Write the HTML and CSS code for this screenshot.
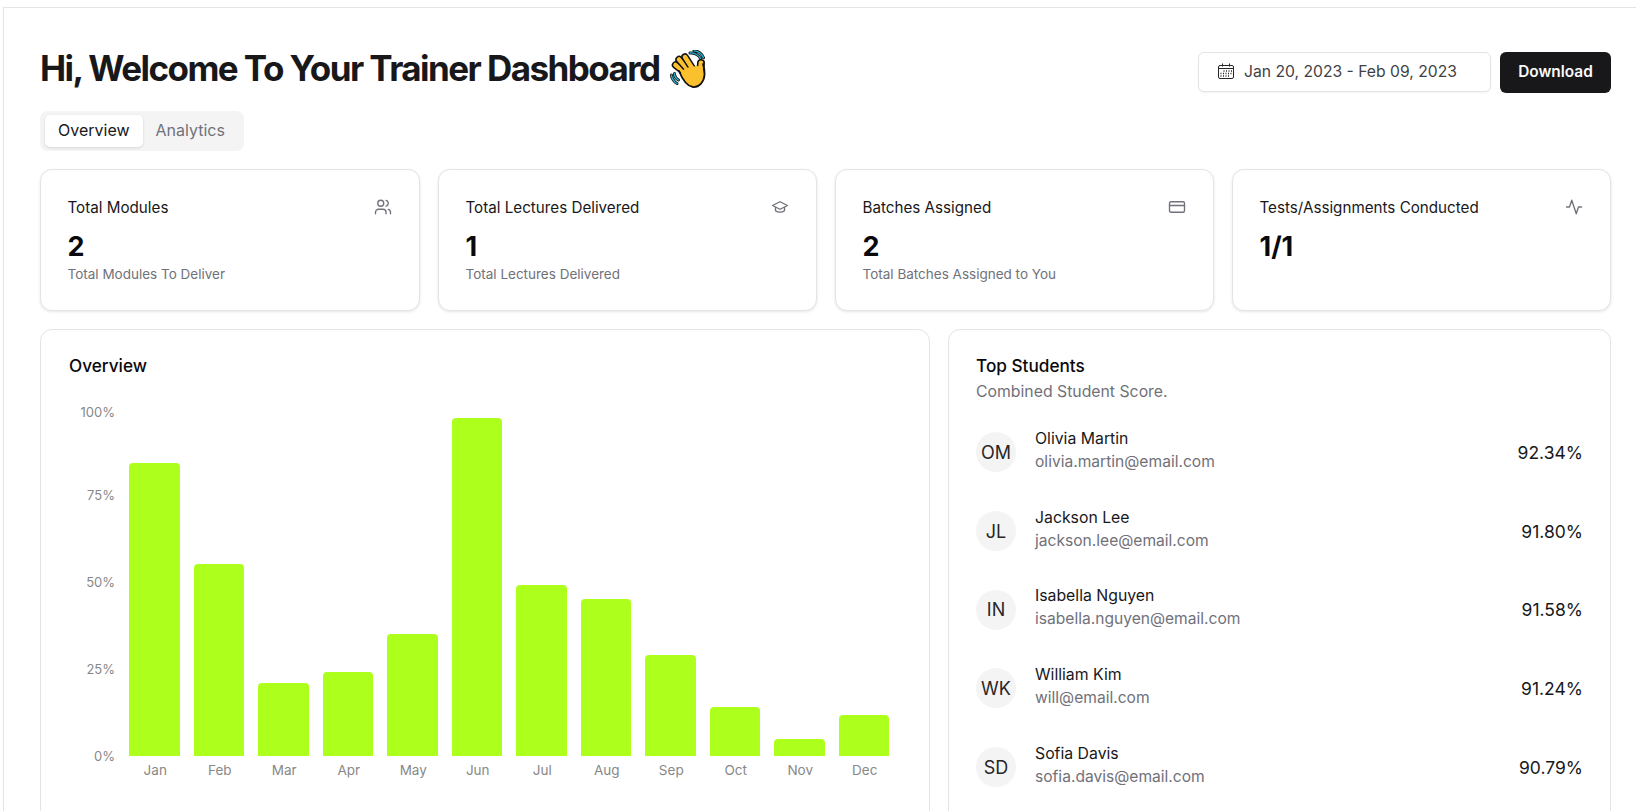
FILE: index.html
```html
<!DOCTYPE html>
<html lang="en">
<head>
    <meta charset="UTF-8">
    <meta name="viewport" content="width=device-width, initial-scale=1.0">
    <title>Trainer Dashboard</title>
    <link rel="stylesheet" href="styles.css">
</head>
<body>
    <main class="dashboard">
        <header class="page-header">
            <h1>Hi, Welcome To Your Trainer Dashboard
                <svg class="wave" viewBox="0 0 36 38" width="36" height="38" aria-hidden="true">
                    <g fill="none" stroke-linecap="round">
                        <path d="M20 3c4-.5 9 2 10.500 5.500M24 .8c4 0 8 3 9.500 7" stroke="#111" stroke-width="3"/>
                        <path d="M20 3c4-.5 9 2 10.500 5.500M24 .8c4 0 8 3 9.500 7" stroke="#27b5d6" stroke-width="1.300"/>
                        <path d="M1.500 25c0 3 2.500 7 5.500 8.500M4.500 23.500c0 2.500 1.500 5 4 6.500" stroke="#111" stroke-width="3"/>
                        <path d="M1.500 25c0 3 2.500 7 5.500 8.500M4.500 23.500c0 2.500 1.500 5 4 6.500" stroke="#27b5d6" stroke-width="1.300"/>
                        <path d="M30 25 31 13" stroke="#111" stroke-width="8"/>
                        <path d="M30 25 31 13" stroke="#fbc02d" stroke-width="4.800"/>
                        <path d="M17 24 5.500 15" stroke="#111" stroke-width="7.500"/>
                        <path d="M17 24 5.500 15" stroke="#fbc02d" stroke-width="4.500"/>
                        <path d="M20 22 9 9.500" stroke="#111" stroke-width="7.500"/>
                        <path d="M20 22 9 9.500" stroke="#fbc02d" stroke-width="4.500"/>
                        <path d="M24 21 15 7" stroke="#111" stroke-width="7.500"/>
                        <path d="M24 21 15 7" stroke="#fbc02d" stroke-width="4.500"/>
                    </g>
                    <path d="M11 24c-1-3 5-6 9-7l8-1c4 0 6 4 6 9 0 8-5 12-11 12-6 0-9-5-12-13z" fill="#fbc02d"/>
                    <path d="M9 21c2 5 6 15 14 16 6 .5 11-5 11.500-12 .2-4-.5-8-1.500-11" fill="none" stroke="#111" stroke-width="1.800" stroke-linecap="round"/>
                </svg>
            </h1>
            <div class="header-actions">
                <div class="date-range">
                    <svg class="icon-calendar" viewBox="0 0 16 16" width="16" height="16" fill="none" stroke="#27272a" aria-hidden="true">
                        <rect x="0.500" y="2.500" width="15" height="13" rx="1.500"/>
                        <path d="M0.500 5.500h15M4.500 0.500v3M11.500 0.500v3"/>
                        <path d="M5.500 8h1M8 8h1M10.500 8h1M13 8h1M2.500 10.500h1M5 10.500h1M7.500 10.500h1M10 10.500h1M12.500 10.500h1M2.500 13h1M5 13h1M7.500 13h1M10 13h1" stroke-width="1.300"/>
                    </svg>
                    <span>Jan 20, 2023 - Feb 09, 2023</span>
                </div>
                <button class="download-btn" type="button">Download</button>
            </div>
        </header>

        <div class="tabs">
            <button class="tab active" type="button">Overview</button>
            <button class="tab" type="button">Analytics</button>
        </div>

        <section class="stats">
            <div class="card stat-card">
                <div class="stat-head">
                    <span>Total Modules</span>
                    <svg class="stat-icon" viewBox="0 0 24 24" aria-hidden="true"><path d="M16 21v-2a4 4 0 0 0-4-4H6a4 4 0 0 0-4 4v2"/><circle cx="9" cy="7" r="4"/><path d="M22 21v-2a4 4 0 0 0-3-3.870"/><path d="M16 3.130a4 4 0 0 1 0 7.750"/></svg>
                </div>
                <div class="stat-value">2</div>
                <p class="stat-sub">Total Modules To Deliver</p>
            </div>
            <div class="card stat-card">
                <div class="stat-head">
                    <span>Total Lectures Delivered</span>
                    <svg class="stat-icon" viewBox="0 0 24 24" aria-hidden="true"><path d="M22 10 12 5 2 10l10 5 10-5z"/><path d="M6 12.500V17c3 2.500 9 2.500 12 0v-4.500"/></svg>
                </div>
                <div class="stat-value">1</div>
                <p class="stat-sub">Total Lectures Delivered</p>
            </div>
            <div class="card stat-card">
                <div class="stat-head">
                    <span>Batches Assigned</span>
                    <svg class="stat-icon" viewBox="0 0 24 24" aria-hidden="true"><rect x="2" y="5" width="20" height="14" rx="2"/><path d="M2 10h20"/></svg>
                </div>
                <div class="stat-value">2</div>
                <p class="stat-sub">Total Batches Assigned to You</p>
            </div>
            <div class="card stat-card">
                <div class="stat-head">
                    <span>Tests/Assignments Conducted</span>
                    <svg class="stat-icon" viewBox="0 0 24 24" aria-hidden="true"><path d="M22 12h-4l-3 9L9 3l-3 9H2"/></svg>
                </div>
                <div class="stat-value">1/1</div>
            </div>
        </section>

        <section class="panels">
            <div class="card panel overview-panel">
                <h3>Overview</h3>
                <div class="chart">
                    <div class="y-axis">
                        <span>100%</span>
                        <span>75%</span>
                        <span>50%</span>
                        <span>25%</span>
                        <span>0%</span>
                    </div>
                    <div class="bars">
                        <div class="bar-col"><div class="bar-track"><div class="bar" style="height: 293px"></div></div><span>Jan</span></div>
                        <div class="bar-col"><div class="bar-track"><div class="bar" style="height: 192px"></div></div><span>Feb</span></div>
                        <div class="bar-col"><div class="bar-track"><div class="bar" style="height: 73px"></div></div><span>Mar</span></div>
                        <div class="bar-col"><div class="bar-track"><div class="bar" style="height: 84px"></div></div><span>Apr</span></div>
                        <div class="bar-col"><div class="bar-track"><div class="bar" style="height: 122px"></div></div><span>May</span></div>
                        <div class="bar-col"><div class="bar-track"><div class="bar" style="height: 338px"></div></div><span>Jun</span></div>
                        <div class="bar-col"><div class="bar-track"><div class="bar" style="height: 171px"></div></div><span>Jul</span></div>
                        <div class="bar-col"><div class="bar-track"><div class="bar" style="height: 157px"></div></div><span>Aug</span></div>
                        <div class="bar-col"><div class="bar-track"><div class="bar" style="height: 101px"></div></div><span>Sep</span></div>
                        <div class="bar-col"><div class="bar-track"><div class="bar" style="height: 49px"></div></div><span>Oct</span></div>
                        <div class="bar-col"><div class="bar-track"><div class="bar" style="height: 17px"></div></div><span>Nov</span></div>
                        <div class="bar-col"><div class="bar-track"><div class="bar" style="height: 41px"></div></div><span>Dec</span></div>
                    </div>
                </div>
            </div>

            <div class="card panel students-panel">
                <h3>Top Students</h3>
                <p class="panel-sub">Combined Student Score.</p>
                <ul class="student-list">
                    <li class="student">
                        <div class="avatar">OM</div>
                        <div class="student-info"><p class="student-name">Olivia Martin</p><p class="student-email">olivia.martin@email.com</p></div>
                        <div class="student-score">92.34%</div>
                    </li>
                    <li class="student">
                        <div class="avatar">JL</div>
                        <div class="student-info"><p class="student-name">Jackson Lee</p><p class="student-email">jackson.lee@email.com</p></div>
                        <div class="student-score">91.80%</div>
                    </li>
                    <li class="student">
                        <div class="avatar">IN</div>
                        <div class="student-info"><p class="student-name">Isabella Nguyen</p><p class="student-email">isabella.nguyen@email.com</p></div>
                        <div class="student-score">91.58%</div>
                    </li>
                    <li class="student">
                        <div class="avatar">WK</div>
                        <div class="student-info"><p class="student-name">William Kim</p><p class="student-email">will@email.com</p></div>
                        <div class="student-score">91.24%</div>
                    </li>
                    <li class="student">
                        <div class="avatar">SD</div>
                        <div class="student-info"><p class="student-name">Sofia Davis</p><p class="student-email">sofia.davis@email.com</p></div>
                        <div class="student-score">90.79%</div>
                    </li>
                </ul>
            </div>
        </section>
    </main>
</body>
</html>
```

FILE: styles.css
```css
* {
    box-sizing: border-box;
}
html, body {
    height: 100%;
    overflow: hidden;
}
body {
    font-family: Inter, "Noto Sans", sans-serif;
    background-color: #fff;
    color: #18181b;
    margin: 0;
    padding: 7px 0 0 3px;
}
p, h1, h3, ul {
    margin: 0;
    padding: 0;
}
.dashboard {
    height: 100%;
    padding: 34px 25px 0 36px;
    border-top: 1px solid #e4e4e7;
    border-left: 1px solid #e4e4e7;
    overflow: hidden;
}
.page-header {
    display: flex;
    justify-content: space-between;
    align-items: flex-start;
    height: 69px;
}
.page-header h1 {
    display: flex;
    align-items: center;
    gap: 10px;
    height: 52px;
    font-size: 35px;
    font-weight: 700;
    letter-spacing: -1.56px;
    color: #18181b;
}
.wave {
    flex: none;
    margin-top: 2px;
}
.header-actions {
    display: flex;
    gap: 9px;
    padding-top: 10px;
}
.date-range {
    display: flex;
    align-items: center;
    gap: 10px;
    width: 293px;
    height: 40px;
    padding: 0 0 2px 19px;
    font-size: 15.7px;
    color: #3f3f46;
    background-color: #fff;
    border: 1px solid #e4e4e7;
    border-radius: 6px;
    box-shadow: 0 1px 2px rgba(0, 0, 0, 0.05);
}
.download-btn {
    width: 111px;
    height: 41px;
    padding: 0 0 2px;
    font-family: inherit;
    font-size: 15.4px;
    font-weight: 600;
    color: #fafafa;
    background-color: #18181b;
    border: none;
    border-radius: 6px;
}
.tabs {
    display: inline-flex;
    align-items: center;
    gap: 0;
    width: 204px;
    height: 40px;
    padding: 0 5px;
    background-color: #f4f4f5;
    border-radius: 8px;
}
.tab {
    height: 32px;
    padding: 0 13px 2px;
    font-family: inherit;
    font-size: 16px;
    font-weight: 400;
    color: #71717a;
    background: none;
    border: none;
    border-radius: 5px;
}
.tab.active {
    color: #18181b;
    background-color: #fff;
    box-shadow: 0 1px 3px rgba(0, 0, 0, 0.12);
}
.card {
    background-color: #fff;
    border: 1px solid #e4e4e7;
    border-radius: 12px;
}
.stats {
    display: grid;
    grid-template-columns: 380px repeat(3, 1fr);
    gap: 18px;
    margin-top: 18px;
}
.stat-card {
    height: 142px;
    padding: 25px 27px 25px 26.5px;
    box-shadow: 0 1px 3px rgba(0, 0, 0, 0.1);
}
.stat-head {
    display: flex;
    justify-content: space-between;
    align-items: center;
    height: 24px;
    font-size: 15.2px;
    font-weight: 400;
    color: #18181b;
}
.stat-icon {
    width: 18px;
    height: 18px;
    fill: none;
    stroke: #71717a;
    stroke-width: 1.800;
    stroke-linecap: round;
    stroke-linejoin: round;
}
.stat-value {
    margin-top: 12px;
    font-size: 27px;
    font-weight: 700;
    line-height: 32px;
    color: #09090b;
}
.stat-sub {
    margin-top: 1px;
    font-size: 13.5px;
    line-height: 20px;
    color: #71717a;
}
.panels {
    display: grid;
    grid-template-columns: 890px 663px;
    gap: 18px;
    margin-top: 18px;
}
.panel {
    height: 520px;
    padding: 24px 27px;
}
.overview-panel {
    padding-left: 28px;
}
.panel h3 {
    font-size: 17.2px;
    font-weight: 500;
    line-height: 24px;
    color: #09090b;
}
.chart {
    display: flex;
    gap: 14px;
    margin-top: 26px;
    padding-right: 13px;
}
.y-axis {
    display: grid;
    grid-template-rows: 83px 87px 87px 87px 16px;
    width: 46px;
    font-size: 13px;
    line-height: 16px;
    text-align: right;
    color: #888;
}
.bars {
    flex: 1;
    display: grid;
    grid-template-columns: repeat(12, 1fr);
    gap: 14px;
}
.bar-col {
    text-align: center;
    font-size: 13.5px;
    color: #888;
}
.bar-col span {
    padding-left: 2px;
}
.bar-track {
    display: flex;
    align-items: flex-end;
    height: 352px;
    margin-bottom: 6px;
}
.bar {
    width: 100%;
    background-color: #adff1c;
    border-radius: 4px 4px 0 0;
}
.panel-sub {
    margin-top: 2px;
    font-size: 15.8px;
    line-height: 24px;
    color: #71717a;
}
.student-list {
    list-style: none;
    margin-top: 9px;
}
.student {
    display: flex;
    align-items: center;
    gap: 19px;
    height: 78.7px;
}
.avatar {
    display: flex;
    align-items: center;
    justify-content: center;
    flex: none;
    width: 40px;
    height: 40px;
    font-size: 18px;
    color: #27272a;
    background-color: #f4f4f5;
    border-radius: 50%;
}
.student-info {
    flex: 1;
    padding-bottom: 5px;
}
.student-name {
    font-size: 15.8px;
    font-weight: 400;
    line-height: 23px;
    color: #18181b;
}
.student-email {
    font-size: 15.6px;
    line-height: 23px;
    color: #71717a;
}
.student-score {
    font-size: 17.5px;
    font-weight: 400;
    color: #18181b;
}
```
